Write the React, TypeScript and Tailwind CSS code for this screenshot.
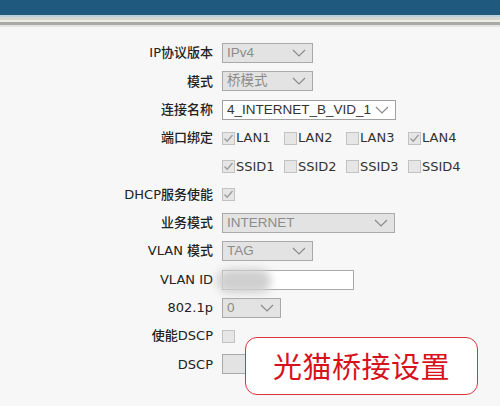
import React from 'react';

const font = { fontFamily: '"DejaVu Sans", "Noto Sans CJK SC", sans-serif' };

const Chevron = () => (
  <svg width="14" height="8" viewBox="0 0 14 8" className="shrink-0">
    <path d="M1 1 L7 7 L13 1" fill="none" stroke="#8a8a8a" strokeWidth="1.2" />
  </svg>
);

const Select = ({ value, width, disabled = true }: { value: string; width: string; disabled?: boolean }) => (
  <div
    className={`${width} h-[20px] flex items-center justify-between pl-[4px] pr-[6px] border ${
      disabled ? 'bg-[#e3e3e3] border-[#a9a9a9] text-[#8c8c8c]' : 'bg-white border-[#a0a0a0] text-[#333]'
    } text-[13.5px] leading-[18px]`}
    style={{ fontFamily: '"Liberation Sans", "Noto Sans CJK SC", sans-serif' }}
  >
    <span className="whitespace-nowrap">{value}</span>
    <Chevron />
  </div>
);

const Check = ({ checked }: { checked?: boolean }) => (
  <div className="w-[13px] h-[13px] border border-[#c2c2c2] bg-[#e6e6e6] flex items-center justify-center shrink-0">
    {checked && (
      <svg width="11" height="11" viewBox="0 0 11 11">
        <path d="M1.5 5.5 L4.2 8.2 L9.5 2" fill="none" stroke="#9a9a9a" strokeWidth="1.3" />
      </svg>
    )}
  </div>
);

const CheckItem = ({ label, checked }: { label: string; checked?: boolean }) => (
  <div className="w-[62px] flex items-center gap-[1px]">
    <Check checked={checked} />
    <span className="text-[13px] text-[#333]">{label}</span>
  </div>
);

const Row = ({ label, children }: { label?: string; children: React.ReactNode }) => (
  <div className="h-[28.3px] flex items-center">
    <div className="w-[213px] text-right text-[13px] text-[#222] font-medium">{label}</div>
    <div className="ml-[9px] flex items-center">{children}</div>
  </div>
);

export default function App() {
  return (
    <div className="w-[500px] h-[406px] bg-[#f7f7f7] relative overflow-hidden" style={font}>
      <div className="h-[15px] bg-[#1f5a7e]" />
      <div className="h-[2px] bg-[#b9cfdc]" />
      <div className="h-[3px] bg-[#d6d6cf]" />
      <div className="h-[2px] bg-[#ecece8]" />
      <div className="h-[3px] bg-[#a9a9a6]" />
      <div className="h-[2px] bg-[#e4e4e2]" />

      <div className="pt-[12px]">
        <Row label="IP协议版本">
          <Select value="IPv4" width="w-[91px]" />
        </Row>
        <Row label="模式">
          <Select value="桥模式" width="w-[91px]" />
        </Row>
        <Row label="连接名称">
          <Select value="4_INTERNET_B_VID_1" width="w-[174px]" disabled={false} />
        </Row>
        <Row label="端口绑定">
          <CheckItem label="LAN1" checked />
          <CheckItem label="LAN2" />
          <CheckItem label="LAN3" />
          <CheckItem label="LAN4" checked />
        </Row>
        <Row>
          <CheckItem label="SSID1" checked />
          <CheckItem label="SSID2" />
          <CheckItem label="SSID3" />
          <CheckItem label="SSID4" />
        </Row>
        <Row label="DHCP服务使能">
          <Check checked />
        </Row>
        <Row label="业务模式">
          <Select value="INTERNET" width="w-[173px]" />
        </Row>
        <Row label="VLAN 模式">
          <Select value="TAG" width="w-[91px]" />
        </Row>
        <Row label="VLAN ID">
          <div className="relative w-[132px] h-[20px] bg-white border border-[#a9a9a9]">
            <div className="absolute -left-[6px] -top-[2px] w-[54px] h-[24px] rounded-full bg-[#cfcfcf] blur-[4px]" />
          </div>
        </Row>
        <Row label="802.1p">
          <Select value="0" width="w-[59px]" />
        </Row>
        <Row label="使能DSCP">
          <Check />
        </Row>
        <Row label="DSCP">
          <div className="w-[40px] h-[20px] bg-[#e3e3e3] border border-[#a9a9a9]" />
        </Row>
      </div>

      <div className="absolute left-[245px] top-[337px] w-[233px] h-[58px] bg-white border-[1.5px] border-[#d9343a] rounded-[12px] flex items-center justify-center">
        <span className="text-[29px] text-[#d7121c] tracking-[0.5px]" style={{ fontFamily: '"Noto Sans CJK SC", sans-serif' }}>
          光猫桥接设置
        </span>
      </div>
    </div>
  );
}
